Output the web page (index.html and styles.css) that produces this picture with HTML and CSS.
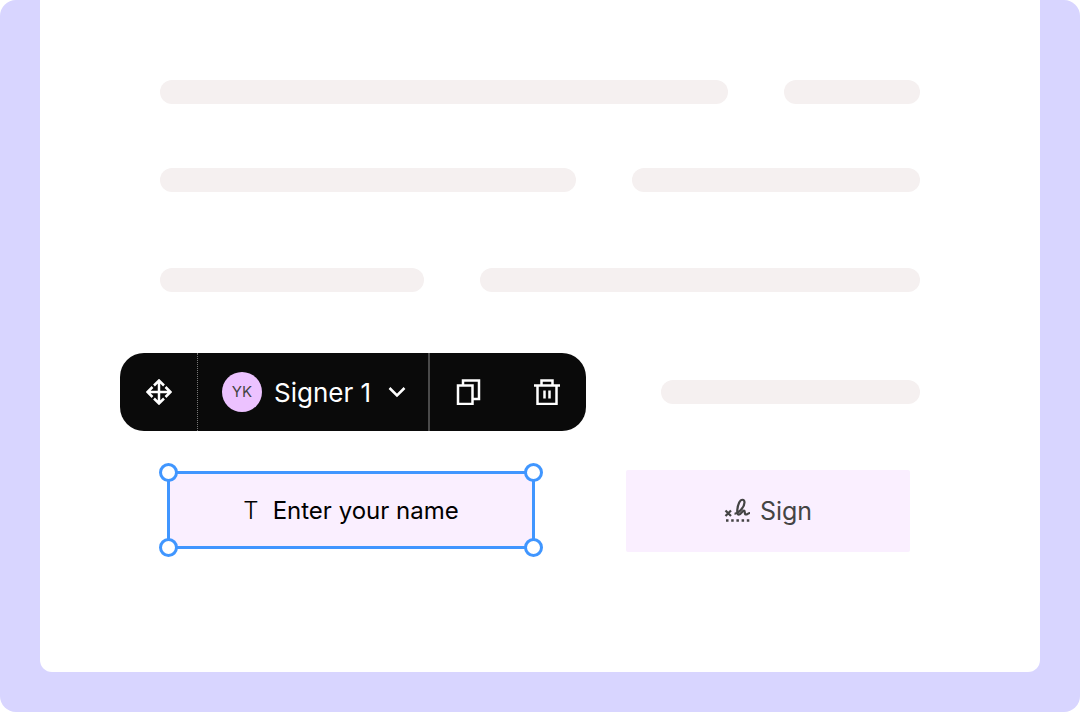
FILE: index.html
```html
<!DOCTYPE html>
<html lang="en">
<head>
  <meta charset="UTF-8" />
  <meta name="viewport" content="width=device-width, initial-scale=1.0"/>
  <title>Document Editor</title>
  <link rel="stylesheet" href="styles.css">
</head>
<body>

  <div class="canvas">
    <main class="sheet">

      <!-- Document text lines -->
      <div class="line-row split-wide">
        <span class="line"></span>
        <span class="line"></span>
      </div>
      <div class="line-row split-mid">
        <span class="line"></span>
        <span class="line"></span>
      </div>
      <div class="line-row split-narrow">
        <span class="line"></span>
        <span class="line"></span>
      </div>

      <!-- Field toolbar -->
      <div class="toolbar-row">
        <div class="toolbar">
          <button class="tool move" type="button" aria-label="Move">
            <svg width="26" height="26" viewBox="0 0 26 26">
              <path d="M13 2v22M2 13h22M8 6.500l5-5 5 5M8 19.500l5 5 5-5M6.500 8l-5 5 5 5M19.500 8l5 5-5 5"/>
            </svg>
          </button>
          <div class="signer">
            <span class="avatar">YK</span>
            <select class="signer-select" aria-label="Signer">
              <option>Signer 1</option>
            </select>
            <svg class="chevron" width="18" height="12" viewBox="0 0 18 12">
              <path d="M1.500 2L9 9.500 16.500 2"/>
            </svg>
          </div>
          <button class="tool" type="button" aria-label="Duplicate">
            <svg width="26" height="26" viewBox="0 0 26 26">
              <path d="M2 6.500h14.500V25H2zM7 6.500V1.500h16V20H16.500"/>
            </svg>
          </button>
          <button class="tool" type="button" aria-label="Delete">
            <svg width="26" height="26" viewBox="0 0 26 26">
              <path d="M0 6.500h26M3.500 6.500V25h19V6.500M7.500 6.500V1.500h11v5M10.500 11.500v8M15.500 11.500v8"/>
            </svg>
          </button>
        </div>
        <span class="line"></span>
      </div>

      <!-- Form fields -->
      <div class="field-row">
        <label class="name-field">
          <span class="type-mark" aria-hidden="true">T</span>
          <input class="name-input" type="text" placeholder="Enter your name" aria-label="Your name" />
          <span class="handle top-left"></span>
          <span class="handle top-right"></span>
          <span class="handle bottom-left"></span>
          <span class="handle bottom-right"></span>
        </label>
        <button class="sign-field" type="button">
          <svg width="27" height="26" viewBox="0 0 27 26">
            <path class="stroke" d="M1.500 12.500l5.500 5.500M7 12.500L1.500 18M10.500 15.500C14 16 20.500 9.500 20.500 4.500C20.500 0.800 17 0.800 15.200 4.500C13.500 8 12 16.500 14.800 16.700C17.300 16.700 18 13 20 12.500C21.500 12.700 20 16.500 22 16.500C23.500 16.500 24 15 26 15"/>
            <path class="dots" d="M2 22.500h24"/>
          </svg>
          <span>Sign</span>
        </button>
      </div>

    </main>
  </div>

</body>
</html>
```

FILE: styles.css
```css
* {
  margin: 0;
  padding: 0;
  box-sizing: border-box;
  font-family: 'Inter', sans-serif;
}

body {
  background: white;
}

.canvas {
  min-height: 100vh;
  display: flex;
  padding: 0 40px 40px;
  background: #d8d5ff;
  border-radius: 16px;
}

.sheet {
  flex: 1;
  padding: 80px 120px;
  background: white;
  border-radius: 0 0 12px 12px;
}

/* Placeholder lines */
.line {
  height: 24px;
  background: #f5f0f0;
  border-radius: 12px;
}

.line-row {
  display: grid;
  gap: 56px;
  margin-bottom: 64px;
}

.split-wide {
  grid-template-columns: 568fr 136fr;
}

.split-mid {
  grid-template-columns: 416fr 288fr;
  margin-bottom: 76px;
}

.split-narrow {
  grid-template-columns: 264fr 440fr;
  margin-bottom: 61px;
}

/* Toolbar */
.toolbar-row {
  display: flex;
  align-items: center;
  gap: 75px;
  margin-left: -40px;
  margin-bottom: 39px;
}

.toolbar-row .line {
  flex: 1;
}

.toolbar {
  display: flex;
  height: 78px;
  background: #0a0a0a;
  border-radius: 24px;
  overflow: hidden;
}

.tool {
  width: 78px;
  display: flex;
  align-items: center;
  justify-content: center;
  background: none;
  border: none;
  cursor: pointer;
}

.tool svg,
.chevron {
  fill: none;
  stroke: white;
  stroke-width: 2.5;
}

.move {
  border-right: 1px dotted #777;
}

.signer {
  display: flex;
  align-items: center;
  padding: 0 22px 0 24px;
  border-right: 2px solid #4a4a4a;
}

.avatar {
  width: 40px;
  height: 40px;
  margin-right: 12px;
  border-radius: 50%;
  background: #ecc2ff;
  color: #444;
  font-size: 15px;
  line-height: 40px;
  text-align: center;
}

.signer-select {
  appearance: none;
  width: 114px;
  background: none;
  border: none;
  color: white;
  font-size: 26px;
  cursor: pointer;
}

.chevron {
  pointer-events: none;
}

/* Fields */
.field-row {
  display: flex;
  justify-content: space-between;
  padding: 0 10px 0 7px;
}

.name-field {
  position: relative;
  display: flex;
  align-items: center;
  justify-content: center;
  gap: 14px;
  width: 368px;
  height: 78px;
  margin-top: 1px;
  background: #faefff;
  border: 3px solid #4096ff;
}

.type-mark {
  font-size: 24px;
  font-weight: 300;
}

.name-input {
  width: 186px;
  background: none;
  border: none;
  outline: none;
  color: black;
  font-size: 24px;
}

.name-input::placeholder {
  color: black;
}

.handle {
  position: absolute;
  width: 19px;
  height: 19px;
  background: white;
  border: 3px solid #4096ff;
  border-radius: 50%;
}

.top-left {
  top: -11px;
  left: -11px;
}

.top-right {
  top: -11px;
  right: -11px;
}

.bottom-left {
  bottom: -11px;
  left: -11px;
}

.bottom-right {
  bottom: -11px;
  right: -11px;
}

.sign-field {
  display: flex;
  align-items: center;
  justify-content: center;
  gap: 9px;
  width: 284px;
  height: 82px;
  background: #faefff;
  border: none;
  border-radius: 2px;
  color: #444;
  font-size: 25px;
  cursor: pointer;
}

.sign-field svg {
  fill: none;
  stroke: #444;
}

.stroke {
  stroke-width: 2.2;
}

.dots {
  stroke-width: 2.5;
  stroke-dasharray: 2.5 2.7;
}
```
